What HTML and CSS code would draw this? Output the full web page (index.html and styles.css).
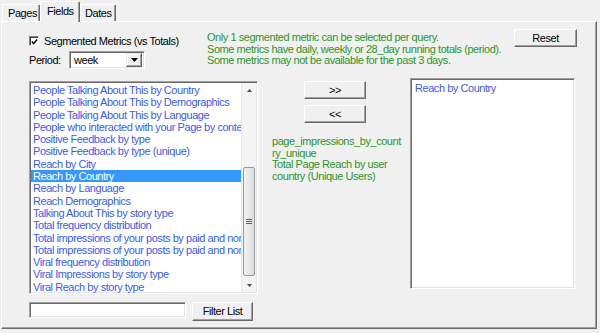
FILE: index.html
```html
<!DOCTYPE html>
<html>
<head>
<meta charset="utf-8">
<link rel="stylesheet" href="styles.css">
</head>
<body>
<div class="window">
  <div class="tabs">
    <div class="tab">Pages</div>
    <div class="tab active">Fields</div>
    <div class="tab">Dates</div>
  </div>
  <div class="panel">
    <div class="top">
      <div class="opts">
        <div class="check-row">
          <span class="checkbox"><svg width="8" height="8" viewBox="0 0 8 8"><path d="M1 3.5 L3 5.8 L7 1.2" fill="none" stroke="#000" stroke-width="1.6"/></svg></span>
          <span>Segmented Metrics (vs Totals)</span>
        </div>
        <div class="period-row">
          <span class="period-label">Period:</span>
          <div class="select">
            <span class="select-text">week</span>
            <span class="drop"><svg width="7" height="4" viewBox="0 0 7 4"><path d="M0 0 H7 L3.5 4 Z" fill="#000"/></svg></span>
          </div>
        </div>
      </div>
      <div class="notes">Only 1 segmented metric can be selected per query.<br>Some metrics have daily, weekly or 28_day running totals (period).<br>Some metrics may not be available for the past 3 days.</div>
      <div class="btn reset">Reset</div>
    </div>
    <div class="bottom">
      <div class="left-col">
        <div class="listbox main-list">
          <ul class="items">
            <li>People Talking About This by Country</li>
            <li>People Talking About This by Demographics</li>
            <li>People Talking About This by Language</li>
            <li>People who interacted with your Page by content type</li>
            <li>Positive Feedback by type</li>
            <li>Positive Feedback by type (unique)</li>
            <li>Reach by City</li>
            <li class="selected">Reach by Country</li>
            <li>Reach by Language</li>
            <li>Reach Demographics</li>
            <li>Talking About This by story type</li>
            <li>Total frequency distribution</li>
            <li>Total impressions of your posts by paid and non-paid</li>
            <li>Total impressions of your posts by paid and non-paid</li>
            <li>Viral frequency distribution</li>
            <li>Viral Impressions by story type</li>
            <li>Viral Reach by story type</li>
          </ul>
          <div class="scrollbar">
            <div class="arrow"><svg width="5" height="3" viewBox="0 0 5 3"><path d="M0 3 H5 L2.5 0 Z" fill="#505050"/></svg></div>
            <div class="track"><div class="thumb"><span class="grip"></span><span class="grip"></span><span class="grip"></span></div></div>
            <div class="arrow"><svg width="5" height="3" viewBox="0 0 5 3"><path d="M0 0 H5 L2.5 3 Z" fill="#505050"/></svg></div>
          </div>
        </div>
        <div class="filter-row">
          <div class="textbox"></div>
          <div class="btn filter">Filter List</div>
        </div>
      </div>
      <div class="mid">
        <div class="btn move first">&gt;&gt;</div>
        <div class="btn move">&lt;&lt;</div>
        <div class="desc">page_impressions_by_count<br>ry_unique<br>Total Page Reach by user<br>country (Unique Users)</div>
      </div>
      <div class="listbox right-list">
        <ul class="items">
          <li>Reach by Country</li>
        </ul>
      </div>
    </div>
  </div>
</div>
</body>
</html>
```

FILE: styles.css
```css
* { box-sizing: border-box; }
html, body {
  margin: 0;
  padding: 0;
}
body {
  width: 600px;
  height: 333px;
  overflow: hidden;
  background: #f0f0f0;
  font-family: "Liberation Sans", Arial, sans-serif;
  font-size: 11px;
  letter-spacing: -0.45px;
  color: #000;
}
.window {
  padding-left: 1px;
}
.tabs {
  display: flex;
  align-items: flex-end;
  height: 21px;
  padding-left: 1px;
}
.tab {
  height: 17px;
  padding: 0 4px 0 5px;
  line-height: 16px;
  border-top: 1px solid #fff;
  border-left: 1px solid #fff;
  border-right: 1px solid #696969;
  box-shadow: inset -1px 0 #a0a0a0;
  border-radius: 2px 2px 0 0;
  background: #f0f0f0;
}
.tab:nth-child(1) { width: 38px; }
.tab.active {
  width: 40px;
  height: 21px;
  margin-bottom: -1px;
  position: relative;
  z-index: 1;
  line-height: 18px;
  padding-left: 6px;
}
.tab:nth-child(3) { width: 36px; padding-left: 4px; }
.panel {
  width: 596px;
  height: 308px;
  border-top: 1px solid #fff;
  border-left: 1px solid #fff;
  border-right: 1px solid #696969;
  border-bottom: 1px solid #696969;
  box-shadow: inset -1px -1px #a0a0a0;
}
.top {
  display: flex;
  align-items: flex-start;
  padding-left: 27px;
  height: 47px;
}
.opts {
  width: 178px;
  flex-shrink: 0;
  margin-top: 14px;
}
.check-row {
  display: flex;
  align-items: center;
  height: 10px;
  gap: 5px;
  white-space: nowrap;
}
.checkbox {
  width: 10px;
  height: 10px;
  flex-shrink: 0;
  border-top: 1px solid #808080;
  border-left: 1px solid #808080;
  border-right: 1px solid #fff;
  border-bottom: 1px solid #fff;
  box-shadow: inset 1px 1px #404040;
  background: #fff;
  display: flex;
  align-items: center;
  justify-content: center;
}
.checkbox svg { display: block; margin: 1px 0 0 1px; }
.period-row {
  display: flex;
  align-items: center;
  margin-top: 5px;
  height: 18px;
}
.period-label {
  width: 40px;
}
.select {
  width: 76px;
  height: 18px;
  display: flex;
  align-items: center;
  background: #fff;
  border-top: 1px solid #a0a0a0;
  border-left: 1px solid #a0a0a0;
  border-right: 1px solid #fff;
  border-bottom: 1px solid #fff;
  box-shadow: inset 1px 1px #696969, inset -1px -1px #e3e3e3;
  padding: 2px;
}
.select-text {
  flex: 1;
  padding-left: 2px;
}
.drop {
  width: 16px;
  height: 14px;
  background: #f0f0f0;
  border-top: 1px solid #e3e3e3;
  border-left: 1px solid #e3e3e3;
  border-right: 1px solid #696969;
  border-bottom: 1px solid #696969;
  box-shadow: inset -1px -1px #a0a0a0, inset 1px 1px #fff;
  display: flex;
  align-items: center;
  justify-content: center;
}
.drop svg { display: block; }
.notes {
  margin-top: 10px;
  line-height: 11.5px;
  color: #2b962b;
  white-space: nowrap;
}
.btn {
  background: #f0f0f0;
  border-top: 1px solid #fff;
  border-left: 1px solid #fff;
  border-right: 1px solid #696969;
  border-bottom: 1px solid #696969;
  box-shadow: inset -1px -1px #a0a0a0;
  display: flex;
  align-items: center;
  justify-content: center;
  padding-bottom: 1px;
  flex-shrink: 0;
}
.reset {
  margin-left: auto;
  margin-right: 19px;
  margin-top: 7px;
  width: 63px;
  height: 18px;
}
.bottom {
  display: flex;
  align-items: flex-start;
  padding-left: 27px;
  margin-top: 9px;
}
.left-col {
  width: 229px;
  flex-shrink: 0;
  margin-top: 3px;
}
.listbox {
  background: #fff;
  border-top: 1px solid #a0a0a0;
  border-left: 1px solid #a0a0a0;
  border-right: 1px solid #fff;
  border-bottom: 1px solid #fff;
  box-shadow: inset 1px 1px #696969, inset -1px -1px #e3e3e3;
  padding: 1px 1px 0 1px;
}
.main-list {
  height: 213px;
  display: flex;
}
.main-list .items {
  padding-top: 1px;
}
.items {
  list-style: none;
  margin: 0;
  padding: 0;
  flex: 1;
  min-width: 0;
  overflow: hidden;
  color: #3a5cf0;
}
.items li {
  height: 12.3px;
  line-height: 12.3px;
  white-space: nowrap;
  overflow: hidden;
  padding-left: 2px;
}
.items li.selected {
  background: #3399ff;
  color: #fff;
}
.scrollbar {
  width: 15px;
  flex-shrink: 0;
  display: flex;
  flex-direction: column;
  background: #f4f4f4;
  border-left: 1px solid #e8e8e8;
  margin-bottom: 1px;
}
.arrow {
  height: 14px;
  display: flex;
  align-items: center;
  justify-content: center;
}
.arrow svg { display: block; }
.track {
  flex: 1;
  padding: 0 1px;
  display: flex;
  flex-direction: column;
  justify-content: flex-end;
}
.thumb {
  height: 109px;
  margin-bottom: 2px;
  border: 1px solid #9a9a9a;
  border-radius: 2px;
  background: linear-gradient(to right, #f2f2f2, #dcdcdc);
  display: flex;
  flex-direction: column;
  align-items: center;
  justify-content: center;
  gap: 1px;
}
.grip {
  display: block;
  width: 6px;
  height: 1px;
  background: #606060;
}
.filter-row {
  display: flex;
  align-items: flex-start;
  margin-top: 8px;
  gap: 6px;
}
.textbox {
  width: 157px;
  height: 16px;
  background: #fff;
  border-top: 1px solid #a0a0a0;
  border-left: 1px solid #a0a0a0;
  border-right: 1px solid #fff;
  border-bottom: 1px solid #fff;
  box-shadow: inset 1px 1px #696969, inset -1px -1px #e3e3e3;
}
.filter {
  width: 61px;
  height: 19px;
}
.mid {
  width: 134px;
  flex-shrink: 0;
  margin-left: 14px;
}
.move {
  width: 62px;
  height: 18px;
  margin-left: 32px;
  margin-top: 6px;
}
.move.first {
  margin-top: 3px;
}
.desc {
  margin-top: 13px;
  line-height: 11.7px;
  color: #2b962b;
}
.right-list {
  width: 165px;
  height: 211px;
  margin-left: 4px;
  margin-top: 0;
  padding: 3px 2px;
}
```
